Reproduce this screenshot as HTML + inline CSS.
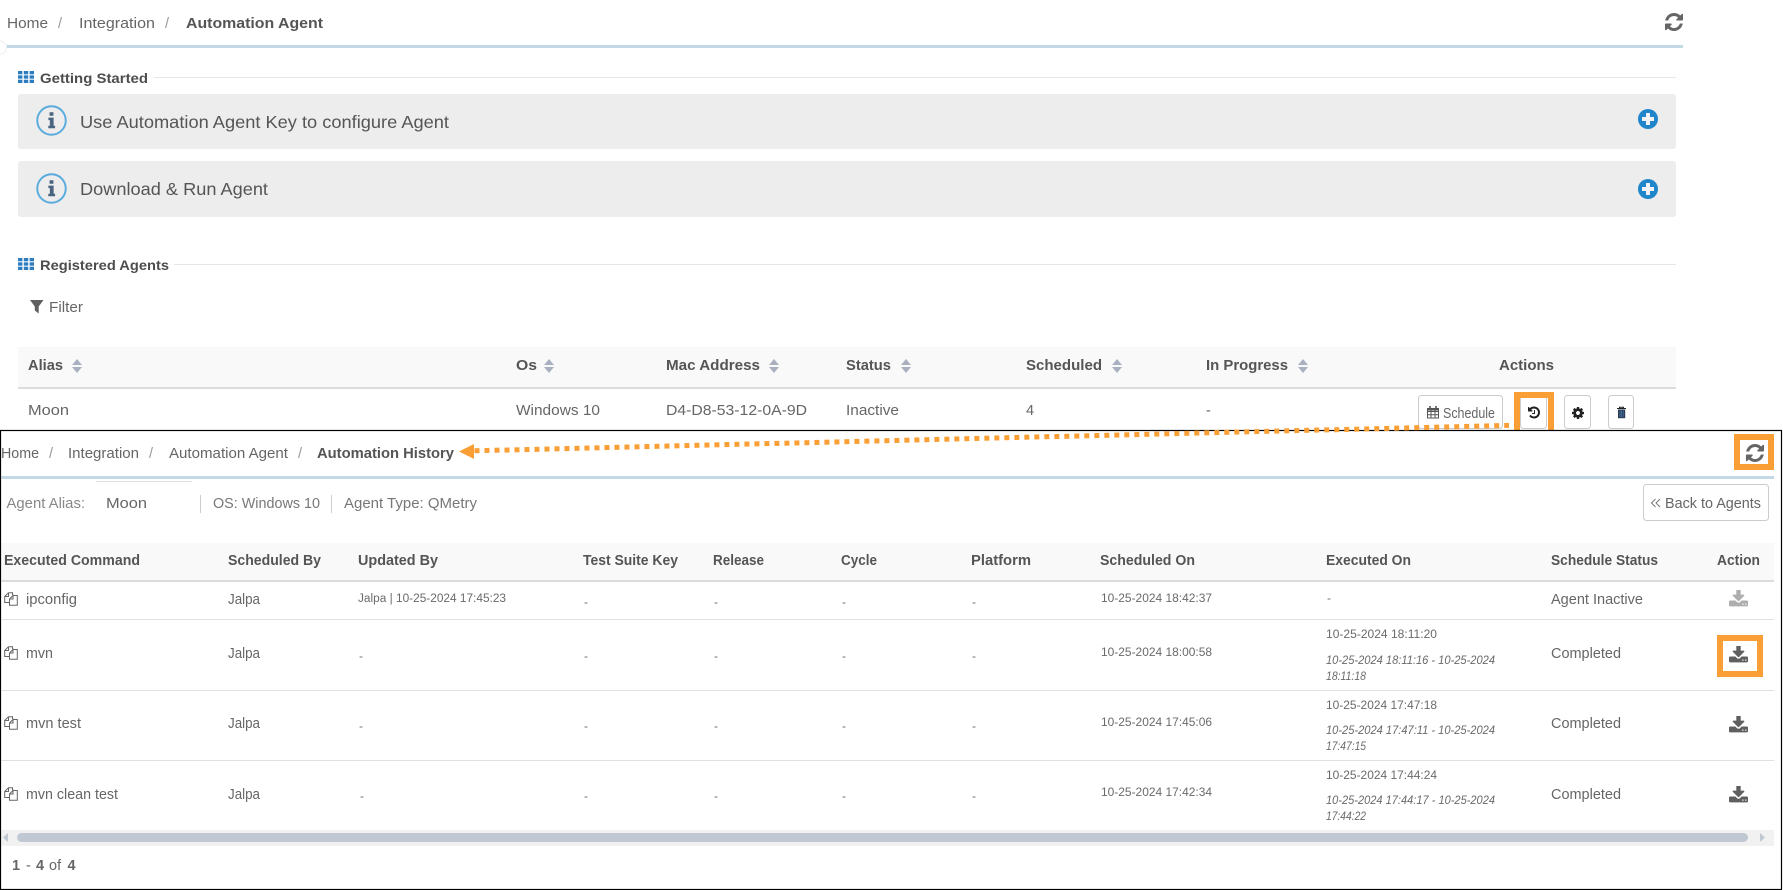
<!DOCTYPE html>
<html><head><meta charset="utf-8"><title>Automation Agent</title>
<style>
html,body{margin:0;padding:0;background:#fff;width:1783px;height:890px;overflow:hidden}
svg{display:block}
text{font-family:"Liberation Sans",sans-serif;font-size:14.5px;fill:#666}
.b{font-weight:700;fill:#555}
.m{font-weight:700;fill:#4d4d4d;font-size:14px}
.l{fill:#999}
.p{font-size:17.5px;fill:#555}
.s{font-size:12px;fill:#6a6a6a}
.i{font-size:11.5px;font-style:italic;fill:#6a6a6a}
</style></head><body>
<svg width="1783" height="890" viewBox="0 0 1783 890" xmlns="http://www.w3.org/2000/svg">
<defs>
<symbol id="refresh" viewBox="128 128 1536 1536"><path fill="#666" d="M1639 1056q0 5-1 7-64 268-268 434.5t-478 166.5q-146 0-282.5-55t-243.5-157l-129 129q-19 19-45 19t-45-19-19-45v-448q0-26 19-45t45-19h448q26 0 45 19t19 45-19 45l-137 137q71 66 161 102t187 36q134 0 250-65t186-179q11-17 53-117 8-23 30-23h192q13 0 22.5 9.5t9.5 22.5zm25-800v448q0 26-19 45t-45 19h-448q-26 0-45-19t-19-45 19-45l138-138q-148-137-349-137-134 0-250 65t-186 179q-11 17-53 117-8 23-30 23h-199q-13 0-22.5-9.5t-9.5-22.5v-7q65-268 270-434.5t480-166.5q146 0 284 55.5t245 156.5l130-129q19-19 45-19t45 19 19 45z"/></symbol>
<symbol id="dl" viewBox="64 128 1664 1440"><path fill="#5f5f5f" d="M1344 1344q0-26-19-45t-45-19-45 19-19 45 19 45 45 19 45-19 19-45zm256 0q0-26-19-45t-45-19-45 19-19 45 19 45 45 19 45-19 19-45zm128-224v320q0 40-28 68t-68 28h-1472q-40 0-68-28t-28-68v-320q0-40 28-68t68-28h465l135 136q58 56 136 56t136-56l136-136h464q40 0 68 28t28 68zm-325-569q17 41-14 70l-448 448q-18 19-45 19t-45-19l-448-448q-31-29-14-70 17-39 59-39h256v-448q0-26 19-45t45-19h256q26 0 45 19t19 45v448h256q42 0 59 39z"/></symbol>
<symbol id="grid" viewBox="0 0 16 12"><g fill="#2b7cc0"><rect x="0" y="0" width="4.4" height="3.3"/><rect x="5.8" y="0" width="4.4" height="3.3"/><rect x="11.6" y="0" width="4.4" height="3.3"/><rect x="0" y="4.35" width="4.4" height="3.3"/><rect x="5.8" y="4.35" width="4.4" height="3.3"/><rect x="11.6" y="4.35" width="4.4" height="3.3"/><rect x="0" y="8.7" width="4.4" height="3.3"/><rect x="5.8" y="8.7" width="4.4" height="3.3"/><rect x="11.6" y="8.7" width="4.4" height="3.3"/></g></symbol>
<symbol id="sort" viewBox="0 0 10 14"><path fill="#a9b1c0" d="M5 0L10 6H0zM5 14L0 8H10z"/></symbol>
<symbol id="copy" viewBox="0 0 14 14"><g fill="none" stroke="#666" stroke-width="1"><path d="M4.5 .7H8.5V3M4.5 .7L.7 4.5V10.5H5"/><path d="M.7 4.5H4.5V.7"/><path d="M9 3.5H13.3V13.3H5.5V7L9 3.5V7H5.5"/></g></symbol>
<symbol id="info" viewBox="0 0 32 32"><circle cx="16" cy="16" r="14.7" fill="none" stroke="#5aabdd" stroke-width="2"/><path fill="#4b6580" d="M14 7.5h4v3.6h-4zM12.8 13h5.4v8.4h1.5v2.6h-7v-2.6h1.6v-5.8h-1.5z"/></symbol>
<symbol id="plus" viewBox="0 0 20 20"><circle cx="10" cy="10" r="10" fill="#1f86cc"/><path fill="#f1f1f6" d="M8 4h4v4h4v4h-4v4H8v-4H4V8h4z"/></symbol>
</defs>

<!-- top page -->
<text x="7" y="28" textLength="41" lengthAdjust="spacingAndGlyphs">Home</text>
<text x="58" y="28" class="l">/</text>
<text x="79" y="28" textLength="76" lengthAdjust="spacingAndGlyphs">Integration</text>
<text x="165" y="28" class="l">/</text>
<text x="186" y="28" class="b" textLength="137" lengthAdjust="spacingAndGlyphs">Automation Agent</text>
<use href="#refresh" x="1665" y="13" width="18" height="18"/>
<rect x="0" y="45" width="1683" height="3" fill="#c3d8e5"/>
<path d="M0 41a6 6 0 0 1 0 13" fill="#fff" stroke="#eee"/>

<use href="#grid" x="18" y="71" width="16" height="12"/>
<text x="40" y="83" class="m" textLength="108" lengthAdjust="spacingAndGlyphs">Getting Started</text>
<rect x="154" y="77" width="1522" height="1" fill="#e6e6e6"/>

<rect x="18" y="94" width="1658" height="55" rx="3" fill="#ededed"/>
<use href="#info" x="36" y="105" width="31" height="31"/>
<text x="80" y="128" class="p" textLength="369" lengthAdjust="spacingAndGlyphs">Use Automation Agent Key to configure Agent</text>
<use href="#plus" x="1638" y="109" width="20" height="20"/>

<rect x="18" y="161" width="1658" height="56" rx="3" fill="#ededed"/>
<use href="#info" x="36" y="173" width="31" height="31"/>
<text x="80" y="195" class="p" textLength="188" lengthAdjust="spacingAndGlyphs">Download &amp; Run Agent</text>
<use href="#plus" x="1638" y="179" width="20" height="20"/>

<use href="#grid" x="18" y="258" width="16" height="12"/>
<text x="40" y="270" class="m" textLength="129" lengthAdjust="spacingAndGlyphs">Registered Agents</text>
<rect x="174" y="264" width="1502" height="1" fill="#e6e6e6"/>

<path d="M30 300H43.5L38.7 306.5V313.5L34.8 310.5V306.5z" fill="#5f5f5f"/>
<text x="49" y="312" textLength="34" lengthAdjust="spacingAndGlyphs">Filter</text>

<rect x="18" y="347" width="1658" height="40" fill="#f9f9f9"/>
<rect x="18" y="387" width="1658" height="2" fill="#dcdcdc"/>
<text x="28" y="370" class="b" textLength="35" lengthAdjust="spacingAndGlyphs">Alias</text><use href="#sort" x="72" y="359" width="10" height="14"/>
<text x="516" y="370" class="b" textLength="21" lengthAdjust="spacingAndGlyphs">Os</text><use href="#sort" x="544" y="359" width="10" height="14"/>
<text x="666" y="370" class="b" textLength="94" lengthAdjust="spacingAndGlyphs">Mac Address</text><use href="#sort" x="769" y="359" width="10" height="14"/>
<text x="846" y="370" class="b" textLength="45" lengthAdjust="spacingAndGlyphs">Status</text><use href="#sort" x="901" y="359" width="10" height="14"/>
<text x="1026" y="370" class="b" textLength="76" lengthAdjust="spacingAndGlyphs">Scheduled</text><use href="#sort" x="1112" y="359" width="10" height="14"/>
<text x="1206" y="370" class="b" textLength="82" lengthAdjust="spacingAndGlyphs">In Progress</text><use href="#sort" x="1298" y="359" width="10" height="14"/>
<text x="1499" y="370" class="b" textLength="55" lengthAdjust="spacingAndGlyphs">Actions</text>

<text x="28" y="415" textLength="41" lengthAdjust="spacingAndGlyphs">Moon</text>
<text x="516" y="415" textLength="84" lengthAdjust="spacingAndGlyphs">Windows 10</text>
<text x="666" y="415" textLength="141" lengthAdjust="spacingAndGlyphs">D4-D8-53-12-0A-9D</text>
<text x="846" y="415" textLength="53" lengthAdjust="spacingAndGlyphs">Inactive</text>
<text x="1026" y="415">4</text>
<text x="1206" y="415">-</text>

<rect x="1418.5" y="395.5" width="84" height="33" rx="3" fill="#fff" stroke="#ccc"/>
<g fill="none" stroke="#555"><rect x="1427.5" y="408.5" width="11" height="9.5"/><path d="M1427.5 411.5h11M1427.5 414.8h11M1431 409v9M1435 409v9"/><path stroke-width="1.6" d="M1430 406v3M1436 406v3"/></g>
<rect x="1427" y="408" width="12" height="2.5" fill="#555"/>
<text x="1443" y="418" textLength="52" lengthAdjust="spacingAndGlyphs">Schedule</text>

<rect x="1520.5" y="395.5" width="26" height="33" rx="3" fill="#fff" stroke="#ccc"/>
<svg x="1528" y="406.5" width="12" height="12" viewBox="128 128 1536 1536"><path fill="#222" d="M1664 896q0 156-61 298t-164 245-245 164-298 61q-172 0-327-72.5t-264-204.5q-7-10-6.5-22.5t8.5-20.5l137-138q10-9 25-9 16 2 23 12 73 95 179 147t225 52q104 0 198.5-40.5t163.5-109.5 109.5-163.5 40.5-198.5-40.5-198.5-109.5-163.5-163.5-109.5-198.5-40.5q-98 0-188 35.5t-160 101.5l137 138q31 30 14 69-17 40-59 40h-448q-26 0-45-19t-19-45v-448q0-42 40-59 39-17 69 14l130 129q107-101 244.5-156.5t284.5-55.5q156 0 298 61t245 164 164 245 61 298zm-640-288v448q0 14-9 23t-23 9h-320q-14 0-23-9t-9-23v-64q0-14 9-23t23-9h224v-352q0-14 9-23t23-9h64q14 0 23 9t9 23z"/></svg>
<rect x="1517" y="395" width="34" height="38" fill="none" stroke="#f99f36" stroke-width="6"/>

<rect x="1564.5" y="395.5" width="26" height="33" rx="3" fill="#fff" stroke="#ccc"/>
<svg x="1572" y="407" width="12" height="12" viewBox="128 128 1536 1536"><path fill="#222" d="M1152 896q0-106-75-181t-181-75-181 75-75 181 75 181 181 75 181-75 75-181zm512-109v222q0 12-8 23t-20 13l-185 28q-19 54-39 91 35 50 107 138 10 12 10 25t-9 23q-27 37-99 108t-94 71q-12 0-26-9l-138-108q-44 23-91 38-16 136-29 186-7 28-36 28h-222q-14 0-24.5-8.5t-11.5-21.5l-28-184q-49-16-90-37l-141 107q-10 9-25 9-14 0-25-11-126-114-165-168-7-10-7-23 0-12 8-23 15-21 51-66.5t54-70.5q-27-50-41-99l-183-27q-13-2-21-12.5t-8-23.5v-222q0-12 8-23t19-13l186-28q14-46 39-92-40-57-107-138-10-12-10-24 0-10 9-23 26-36 98.5-107.5t94.5-71.5q13 0 26 10l138 107q44-23 91-38 16-136 29-186 7-28 36-28h222q14 0 24.5 8.5t11.5 21.5l28 184q49 16 90 37l142-107q9-9 24-9 13 0 25 10 129 119 165 170 7 8 7 22 0 12-8 23-15 21-51 66.5t-54 70.5q26 50 41 98l183 28q13 2 21 12.5t8 23.5z"/></svg>

<rect x="1608.5" y="395.5" width="25" height="33" rx="3" fill="#fff" stroke="#ccc"/>
<path d="M1617 408.5h9M1619.5 408.5v-1.2h4v1.2" fill="none" stroke="#222" stroke-width="1"/>
<path d="M1618 409.5h7.2v8.7h-7.2z" fill="#2a3c55"/>
<path d="M1620 410.5v6.6M1621.6 410.5v6.6M1623.2 410.5v6.6" stroke="#4d7fb0" stroke-width=".7"/>

<!-- bottom page -->
<rect x="0" y="430" width="1783" height="460" fill="#fff"/>
<rect x=".5" y="430.5" width="1781" height="459" fill="none" stroke="#000" stroke-width="1.2"/>

<path d="M474.5 450.8L1509 425.4" fill="none" stroke="#f99f36" stroke-width="5" stroke-dasharray="5 5"/>
<path d="M459 451.5L474 444V459z" fill="#f99f36"/>

<text x="1" y="458" textLength="38" lengthAdjust="spacingAndGlyphs">Home</text>
<text x="49" y="458" class="l">/</text>
<text x="68" y="458" textLength="71" lengthAdjust="spacingAndGlyphs">Integration</text>
<text x="149" y="458" class="l">/</text>
<text x="169" y="458" textLength="119" lengthAdjust="spacingAndGlyphs">Automation Agent</text>
<text x="298" y="458" class="l">/</text>
<text x="317" y="458" class="b" textLength="137" lengthAdjust="spacingAndGlyphs">Automation History</text>

<use href="#refresh" x="1746" y="444" width="18" height="18"/>
<rect x="1737" y="437" width="34" height="30" fill="none" stroke="#f99f36" stroke-width="6"/>
<rect x="1.5" y="476" width="1772.5" height="3" fill="#c3d8e5"/>

<rect x="96" y="481" width="96" height="1" fill="#e0e0e0"/>
<text x="6.5" y="508" style="fill:#888;font-weight:400" textLength="78.5" lengthAdjust="spacingAndGlyphs">Agent Alias:</text>
<text x="106" y="508" textLength="41" lengthAdjust="spacingAndGlyphs">Moon</text>
<rect x="200" y="495" width="1" height="18" fill="#ccc"/>
<text x="213" y="508" style="fill:#777" textLength="107" lengthAdjust="spacingAndGlyphs">OS: Windows 10</text>
<rect x="331" y="495" width="1" height="18" fill="#ccc"/>
<text x="344" y="508" style="fill:#777" textLength="133" lengthAdjust="spacingAndGlyphs">Agent Type: QMetry</text>

<rect x="1643.5" y="484.5" width="125" height="36" rx="3" fill="#fff" stroke="#ccc"/>
<path d="M1655.5 499l-4 4 4 4M1660 499l-4 4 4 4" fill="none" stroke="#777"/>
<text x="1665" y="508" textLength="96" lengthAdjust="spacingAndGlyphs">Back to Agents</text>

<rect x="1.5" y="543" width="1772.5" height="37" fill="#f9f9f9"/>
<rect x="1.5" y="580" width="1772.5" height="2" fill="#dcdcdc"/>
<text x="4" y="565" class="b" textLength="136" lengthAdjust="spacingAndGlyphs">Executed Command</text>
<text x="228" y="565" class="b" textLength="93" lengthAdjust="spacingAndGlyphs">Scheduled By</text>
<text x="358" y="565" class="b" textLength="80" lengthAdjust="spacingAndGlyphs">Updated By</text>
<text x="583" y="565" class="b" textLength="95" lengthAdjust="spacingAndGlyphs">Test Suite Key</text>
<text x="713" y="565" class="b" textLength="51" lengthAdjust="spacingAndGlyphs">Release</text>
<text x="841" y="565" class="b" textLength="36" lengthAdjust="spacingAndGlyphs">Cycle</text>
<text x="971" y="565" class="b" textLength="60" lengthAdjust="spacingAndGlyphs">Platform</text>
<text x="1100" y="565" class="b" textLength="95" lengthAdjust="spacingAndGlyphs">Scheduled On</text>
<text x="1326" y="565" class="b" textLength="85" lengthAdjust="spacingAndGlyphs">Executed On</text>
<text x="1551" y="565" class="b" textLength="107" lengthAdjust="spacingAndGlyphs">Schedule Status</text>
<text x="1717" y="565" class="b" textLength="43" lengthAdjust="spacingAndGlyphs">Action</text>

<g fill="#e0e0e0"><rect x="1.5" y="619" width="1772.5" height="1"/><rect x="1.5" y="690" width="1772.5" height="1"/><rect x="1.5" y="760" width="1772.5" height="1"/></g>

<!-- row 1 -->
<use href="#copy" x="4" y="592" width="14" height="14"/>
<text x="26" y="604" textLength="51" lengthAdjust="spacingAndGlyphs">ipconfig</text>
<text x="228" y="604" textLength="32" lengthAdjust="spacingAndGlyphs">Jalpa</text>
<text x="358" y="602" class="s" style="font-size:11.5px" textLength="148" lengthAdjust="spacingAndGlyphs">Jalpa | 10-25-2024 17:45:23</text>
<text x="584" y="606" class="s">-</text><text x="714" y="606" class="s">-</text><text x="842" y="606" class="s">-</text><text x="972" y="606" class="s">-</text>
<text x="1101" y="602" class="s" textLength="111" lengthAdjust="spacingAndGlyphs">10-25-2024 18:42:37</text>
<text x="1327" y="602" class="s">-</text>
<text x="1551" y="604" textLength="92" lengthAdjust="spacingAndGlyphs">Agent Inactive</text>
<use href="#dl" x="1729" y="590" width="19" height="17" opacity=".5"/>

<!-- row 2 -->
<use href="#copy" x="4" y="646" width="14" height="14"/>
<text x="26" y="658" textLength="27" lengthAdjust="spacingAndGlyphs">mvn</text>
<text x="228" y="658" textLength="32" lengthAdjust="spacingAndGlyphs">Jalpa</text>
<text x="359" y="660" class="s">-</text>
<text x="584" y="660" class="s">-</text><text x="714" y="660" class="s">-</text><text x="842" y="660" class="s">-</text><text x="972" y="660" class="s">-</text>
<text x="1101" y="656" class="s" textLength="111" lengthAdjust="spacingAndGlyphs">10-25-2024 18:00:58</text>
<text x="1326" y="638" class="s" textLength="111" lengthAdjust="spacingAndGlyphs">10-25-2024 18:11:20</text>
<text x="1326" y="664" class="i" textLength="169" lengthAdjust="spacingAndGlyphs">10-25-2024 18:11:16 - 10-25-2024</text>
<text x="1326" y="680" class="i" textLength="40" lengthAdjust="spacingAndGlyphs">18:11:18</text>
<text x="1551" y="658" textLength="70" lengthAdjust="spacingAndGlyphs">Completed</text>
<use href="#dl" x="1729" y="646" width="19" height="17"/>
<rect x="1720" y="638" width="40" height="36" fill="none" stroke="#f99f36" stroke-width="6"/>

<!-- row 3 -->
<use href="#copy" x="4" y="716" width="14" height="14"/>
<text x="26" y="728" textLength="55" lengthAdjust="spacingAndGlyphs">mvn test</text>
<text x="228" y="728" textLength="32" lengthAdjust="spacingAndGlyphs">Jalpa</text>
<text x="359" y="730" class="s">-</text>
<text x="584" y="730" class="s">-</text><text x="714" y="730" class="s">-</text><text x="842" y="730" class="s">-</text><text x="972" y="730" class="s">-</text>
<text x="1101" y="726" class="s" textLength="111" lengthAdjust="spacingAndGlyphs">10-25-2024 17:45:06</text>
<text x="1326" y="709" class="s" textLength="111" lengthAdjust="spacingAndGlyphs">10-25-2024 17:47:18</text>
<text x="1326" y="734" class="i" textLength="169" lengthAdjust="spacingAndGlyphs">10-25-2024 17:47:11 - 10-25-2024</text>
<text x="1326" y="750" class="i" textLength="40" lengthAdjust="spacingAndGlyphs">17:47:15</text>
<text x="1551" y="728" textLength="70" lengthAdjust="spacingAndGlyphs">Completed</text>
<use href="#dl" x="1729" y="716" width="19" height="17"/>

<!-- row 4 -->
<use href="#copy" x="4" y="787" width="14" height="14"/>
<text x="26" y="799" textLength="92" lengthAdjust="spacingAndGlyphs">mvn clean test</text>
<text x="228" y="799" textLength="32" lengthAdjust="spacingAndGlyphs">Jalpa</text>
<text x="360" y="800" class="s">-</text>
<text x="584" y="800" class="s">-</text><text x="714" y="800" class="s">-</text><text x="842" y="800" class="s">-</text><text x="972" y="800" class="s">-</text>
<text x="1101" y="796" class="s" textLength="111" lengthAdjust="spacingAndGlyphs">10-25-2024 17:42:34</text>
<text x="1326" y="779" class="s" textLength="111" lengthAdjust="spacingAndGlyphs">10-25-2024 17:44:24</text>
<text x="1326" y="804" class="i" textLength="169" lengthAdjust="spacingAndGlyphs">10-25-2024 17:44:17 - 10-25-2024</text>
<text x="1326" y="820" class="i" textLength="40" lengthAdjust="spacingAndGlyphs">17:44:22</text>
<text x="1551" y="799" textLength="70" lengthAdjust="spacingAndGlyphs">Completed</text>
<use href="#dl" x="1729" y="786" width="19" height="17"/>

<!-- scrollbar -->
<rect x="1.5" y="830" width="1772.5" height="16" fill="#f1f1f1"/>
<rect x="17" y="833" width="1731" height="9" rx="4.5" fill="#c0c9d3"/>
<path d="M3 837.5L8 833V842z" fill="#c0c9d3"/>
<path d="M1765 837.5L1760 833V842z" fill="#c0c9d3"/>

<text x="12" y="870" class="b" style="fill:#666">1</text>
<text x="26" y="870">-</text>
<text x="36" y="870" class="b" style="fill:#666">4</text>
<text x="49" y="870">of</text>
<text x="67.5" y="870" class="b" style="fill:#666">4</text>
</svg>
</body></html>
